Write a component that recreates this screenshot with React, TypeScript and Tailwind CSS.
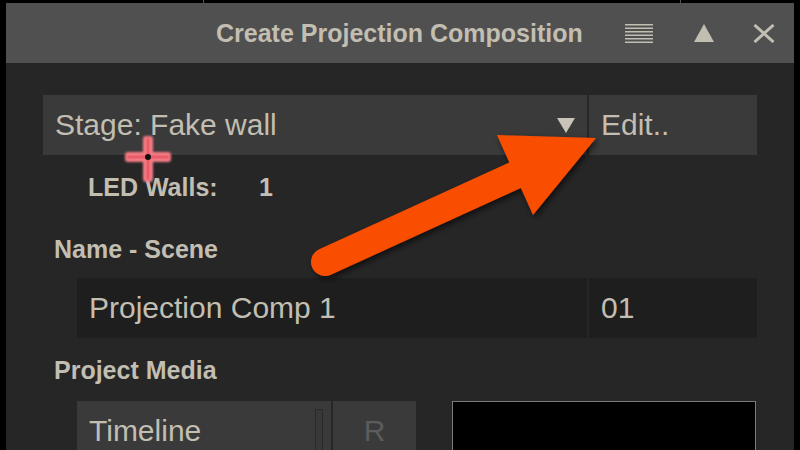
import React from "react";

const font = { fontFamily: '"Liberation Sans", Arial, sans-serif' };

function MenuIcon() {
  return (
    <svg width="28" height="19" viewBox="0 0 28 19" className="block">
      {[0, 3.5, 7, 10.5, 14, 17.5].map((y) => (
        <rect key={y} x="0" y={y} width="28" height="1.5" fill="#c2beb2" />
      ))}
    </svg>
  );
}

function UpIcon() {
  return (
    <svg width="20" height="18" viewBox="0 0 20 18" className="block">
      <polygon points="10,0 20,18 0,18" fill="#c2beb2" />
    </svg>
  );
}

function CloseIcon() {
  return (
    <svg width="22" height="19" viewBox="0 0 22 19" className="block">
      <path d="M1.5 1 L20.5 18 M20.5 1 L1.5 18" stroke="#c2beb2" strokeWidth="3" />
    </svg>
  );
}

function Label({ children, className = "" }: { children: React.ReactNode; className?: string }) {
  return (
    <div className={"text-[25px] leading-none font-bold text-[#c2beb2] " + className}>{children}</div>
  );
}

export default function App() {
  return (
    <div className="relative w-[800px] h-[450px] bg-black overflow-hidden" style={font}>
      {/* top strip */}
      <div className="relative h-[3px]">
        <div className="absolute left-[203px] top-0 w-[1px] h-[3px] bg-[#555]" />
        <div className="absolute left-[680px] top-0 w-[1px] h-[3px] bg-[#555]" />
      </div>

      {/* window */}
      <div className="ml-[6px] w-[788px] h-[447px] bg-[#262626] flex flex-col">
        {/* title bar */}
        <div className="h-[60px] bg-[#505050] flex items-center shrink-0">
          <div className="ml-[210px] text-[25px] leading-none font-bold text-[#c2beb2] whitespace-nowrap">
            Create Projection Composition
          </div>
          <div className="ml-[42px]">
            <MenuIcon />
          </div>
          <div className="ml-[41px]">
            <UpIcon />
          </div>
          <div className="ml-[39px]">
            <CloseIcon />
          </div>
        </div>

        {/* body */}
        <div className="flex flex-col pt-[32px]">
          {/* stage row */}
          <div className="flex ml-[37px] gap-[2px] h-[60px]">
            <div className="w-[544px] bg-[#3a3a3a] flex items-center justify-between pl-3 pr-3">
              <span className="text-[30px] leading-none text-[#c2beb2]">Stage: Fake wall</span>
              <svg width="18" height="15" viewBox="0 0 18 15" className="block">
                <polygon points="0,0 18,0 9,15" fill="#c8c4b8" />
              </svg>
            </div>
            <div className="w-[168px] bg-[#3a3a3a] flex items-center pl-3">
              <span className="text-[30px] leading-none text-[#c2beb2]">Edit..</span>
            </div>
          </div>

          {/* LED walls */}
          <div className="flex mt-[20px] ml-[82px]">
            <Label className="w-[171px]">LED Walls:</Label>
            <Label>1</Label>
          </div>

          <Label className="mt-[37px] ml-[48px]">Name - Scene</Label>

          {/* name row */}
          <div className="flex ml-[71px] mt-[16px] gap-[2px] h-[60px]">
            <div className="w-[510px] bg-[#1e1e1e] flex items-center pl-3">
              <span className="text-[30px] leading-none text-[#c2beb2]">Projection Comp 1</span>
            </div>
            <div className="w-[168px] bg-[#1e1e1e] flex items-center pl-3">
              <span className="text-[30px] leading-none text-[#c2beb2]">01</span>
            </div>
          </div>

          <Label className="mt-[20px] ml-[48px]">Project Media</Label>

          {/* media row */}
          <div className="flex ml-[71px] mt-[18px] h-[60px]">
            <div className="w-[254px] bg-[#3a3a3a] flex items-center pl-3 relative">
              <span className="text-[30px] leading-none text-[#c2beb2]">Timeline</span>
              <div className="absolute left-[238px] top-[8px] w-[8px] h-[60px] border border-[#2a2a2a] bg-[#383838]" />
            </div>
            <div className="ml-[2px] w-[83px] bg-[#3a3a3a] flex items-center justify-center">
              <span className="text-[30px] leading-none text-[#5c5c5c]">R</span>
            </div>
            <div className="ml-[36px] w-[304px] h-[60px] border border-[#7a7a7a] bg-black" />
          </div>
        </div>
      </div>

      {/* crosshair cursor + annotation arrow */}
      <svg className="absolute left-0 top-0 pointer-events-none" width="800" height="450">
        <defs>
          <filter id="soft" x="-20%" y="-20%" width="140%" height="140%">
            <feGaussianBlur stdDeviation="0.8" />
          </filter>
          <filter id="shadow" x="-20%" y="-20%" width="140%" height="140%">
            <feDropShadow dx="2" dy="3" stdDeviation="3" floodColor="#000" floodOpacity="0.6" />
          </filter>
        </defs>
        <g filter="url(#soft)">
          <rect x="125" y="152" width="46" height="10" rx="3" fill="#f47c86" />
          <rect x="143" y="136" width="10" height="46" rx="3" fill="#f47c86" />
          <rect x="127" y="156" width="42" height="2" fill="#e23a48" />
          <rect x="147" y="138" width="2" height="42" fill="#e23a48" />
        </g>
        <circle cx="148" cy="157" r="3" fill="#111" />

        <g filter="url(#shadow)" fill="#f94e00">
          <line x1="325" y1="262" x2="520" y2="173" stroke="#f94e00" strokeWidth="28" strokeLinecap="round" />
          <polygon points="497,135 596,138 533,215" />
        </g>
      </svg>
    </div>
  );
}
